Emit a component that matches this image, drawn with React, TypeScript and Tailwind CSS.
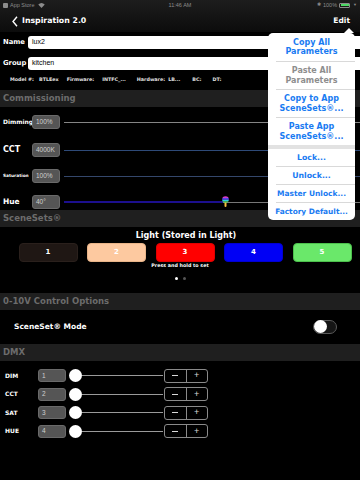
import React from 'react';

const levels = [
  { label: 'Dimming', size: 'text-[6px]', value: '100%', line: 'bg-[#858585]', mt: 'mt-[8px]' },
  { label: 'CCT', size: 'text-[8px]', value: '4000K', line: 'bg-[#2e4a78]', mt: 'mt-[14px]' },
  { label: 'Saturation', size: 'text-[4.3px]', value: '100%', line: 'bg-[#34476b]', mt: 'mt-[12px]' },
];

const scenes = [
  { n: '1', cls: 'bg-[#1f1714] border-[#2a201c]' },
  { n: '2', cls: 'bg-[#fdc9a0] border-[#e8b488]' },
  { n: '3', cls: 'bg-[#ff0000] border-[#e00000]' },
  { n: '4', cls: 'bg-[#0000f5] border-[#0000d0]' },
  { n: '5', cls: 'bg-[#6ae86a] border-[#4cc04c]' },
];

const dmx = [
  { label: 'DIM', v: '1' },
  { label: 'CCT', v: '2' },
  { label: 'SAT', v: '3' },
  { label: 'HUE', v: '4' },
];

function SectionHeader({ title }: { title: string }) {
  return (
    <div className="h-[17px] bg-[#1f1f1f] flex items-center pl-[3px] text-[8.5px] font-bold text-[#6c6c6c] leading-none">
      {title}
    </div>
  );
}

function ValueBox({ value, w = 'w-[28px]', h = 'h-[14px]' }: { value: string; w?: string; h?: string }) {
  return (
    <div
      className={`${w} ${h} shrink-0 rounded-[3px] bg-[#555555] border border-[#6a6a6a] flex items-center pl-[3px] font-['Liberation_Sans',sans-serif] text-[6.5px] text-[#d0d0d0] font-normal`}
    >
      {value}
    </div>
  );
}

function HueThumb() {
  return (
    <svg width="7" height="12" viewBox="0 0 7 12" className="absolute left-[158px] top-[-5px]">
      <defs>
        <clipPath id="hc">
          <circle cx="3.5" cy="3.5" r="3.3" />
        </clipPath>
      </defs>
      <rect x="2.5" y="6" width="2" height="5" rx="1" fill="#f5c040" />
      <g clipPath="url(#hc)">
        <rect x="0" y="0" width="7" height="2" fill="#d43cc8" />
        <rect x="0" y="2" width="7" height="1.8" fill="#5a3cf0" />
        <rect x="0" y="3.8" width="7" height="1.6" fill="#2ad0e0" />
        <rect x="0" y="5.4" width="7" height="2" fill="#5ee05a" />
      </g>
    </svg>
  );
}

function PopItem({ children, h, gray, size = 'text-[8px]' }: { children: React.ReactNode; h: string; gray?: boolean; size?: string }) {
  return (
    <div
      className={`${h} flex flex-col items-center justify-center text-center font-bold leading-[9.5px] ${size} ${gray ? 'text-[#8e8e8e]' : 'text-[#1a7bf2]'}`}
    >
      {children}
    </div>
  );
}

function PopDivider() {
  return <div className="h-px ml-[8px] bg-[#d9d9d9]" />;
}

export default function App() {
  return (
    <div className="relative w-[360px] h-[480px] overflow-hidden bg-black text-white font-['DejaVu_Sans',sans-serif] font-bold">
      {/* status + nav */}
      <div className="bg-gradient-to-b from-[#1d1d1d] to-[#0c0c0c]">
        <div className="h-[10px] grid grid-cols-3 items-center px-[3px] text-[5.5px] font-normal text-[#8c8c8c] font-['Liberation_Sans',sans-serif]">
          <div className="flex items-center gap-[2px]">
            <div className="w-[5px] h-[5px] rounded-[1px] bg-[#8c8c8c]" />
            <span>App Store</span>
            <svg width="7" height="5" viewBox="0 0 14 10" className="ml-[2px]">
              <path d="M7 10 L0.5 3.2 A9.5 9.5 0 0 1 13.5 3.2 Z" fill="#8c8c8c" />
            </svg>
          </div>
          <div className="text-center">11:46 AM</div>
          <div className="flex items-center justify-end gap-[2px]">
            <span className="text-[5px]">✱</span>
            <span>100%</span>
            <div className="w-[11px] h-[5px] border border-[#8c8c8c] rounded-[1px] p-[0.5px] flex">
              <div className="flex-1 bg-[#4cd964]" />
            </div>
            <span className="text-[4px] ml-[1px]">▼</span>
          </div>
        </div>
        <div className="h-[22px] flex items-center justify-between pl-[12px] pr-[10px]">
          <div className="flex items-center gap-[4px]">
            <svg width="6" height="11" viewBox="0 0 6 11">
              <path d="M5 0.7 L1 5.5 L5 10.3" stroke="white" strokeWidth="1.4" fill="none" />
            </svg>
            <span className="text-[7.8px] leading-none">Inspiration 2.0</span>
          </div>
          <span className="text-[7.5px] leading-none">Edit</span>
        </div>
      </div>

      {/* name / group */}
      <div className="pt-[4px] flex flex-col gap-[8px]">
        {[['Name', 'lux2'], ['Group', 'kitchen']].map(([l, v]) => (
          <div key={l} className="flex items-center">
            <span className="w-[28px] pl-[3px] text-[6.8px] leading-none">{l}</span>
            <div className="flex-1 h-[13px] bg-white rounded-l-[3px] flex items-center pl-[4px] font-['Liberation_Sans',sans-serif] font-normal text-[7px] text-black">
              {v}
            </div>
          </div>
        ))}
      </div>
      <div className="h-[20px] flex items-center pl-[10px] text-[4.8px] leading-none text-[#e0e0e0]">
        <span>Model #:</span>
        <span className="ml-[5px]">BTLEex</span>
        <span className="ml-[8px]">Firmware:</span>
        <span className="ml-[8px]">INTFC_...</span>
        <span className="ml-[11px]">Hardware:</span>
        <span className="ml-[3px]">LB...</span>
        <span className="ml-[12px]">BC:</span>
        <span className="ml-[11px]">DT:</span>
      </div>

      {/* commissioning */}
      <SectionHeader title="Commissioning" />
      <div className="flex flex-col pb-[1px]">
        {levels.map((r) => (
          <div key={r.label} className={`${r.mt} h-[14px] flex items-center`}>
            <span className={`w-[32px] pl-[3px] leading-none ${r.size}`}>{r.label}</span>
            <ValueBox value={r.value} />
            <div className={`ml-[4px] flex-1 h-px ${r.line}`} />
          </div>
        ))}
        <div className="mt-[12px] h-[14px] flex items-center">
          <span className="w-[32px] pl-[3px] leading-none text-[7.5px]">Hue</span>
          <ValueBox value="40°" />
          <div className="relative ml-[4px] flex-1 flex items-center">
            <div className="w-[159px] h-[1.5px] bg-[#1c0f8e]" />
            <div className="flex-1 h-px bg-[#777777]" />
            <HueThumb />
          </div>
        </div>
      </div>

      {/* scene sets */}
      <SectionHeader title="SceneSets®" />
      <div className="flex flex-col items-center pt-[5px]">
        <div className="text-[8px] leading-[8px] pl-[12px]">Light (Stored in Light)</div>
        <div className="mt-[3px] flex gap-[9.5px] pl-[10px]">
          {scenes.map((s) => (
            <div
              key={s.n}
              className={`w-[59px] h-[19px] rounded-[4px] border flex items-center justify-center text-[7px] text-white ${s.cls}`}
            >
              {s.n}
            </div>
          ))}
        </div>
        <div className="text-[4.8px] leading-[6px] mt-[1px]">Press and hold to set</div>
        <div className="mt-[8px] flex gap-[5px]">
          <div className="w-[3px] h-[3px] rounded-full bg-white" />
          <div className="w-[3px] h-[3px] rounded-full bg-[#555555]" />
        </div>
      </div>

      {/* 0-10V */}
      <div className="mt-[12.5px]">
        <SectionHeader title="0-10V Control Options" />
      </div>
      <div className="h-[34px] flex items-center justify-between pl-[14px] pr-[23px]">
        <span className="text-[7.5px] leading-none">SceneSet® Mode</span>
        <div className="w-[24px] h-[14px] rounded-full border border-[#5a5a5a] bg-[#151515] flex items-center">
          <div className="w-[13px] h-[13px] rounded-full bg-white" />
        </div>
      </div>

      {/* DMX */}
      <SectionHeader title="DMX" />
      <div className="pt-[6px] flex flex-col">
        {dmx.map((r) => (
          <div key={r.label} className="h-[18.5px] flex items-center pl-[5px]">
            <span className="w-[33px] text-[6px] leading-none">{r.label}</span>
            <ValueBox value={r.v} h="h-[13px]" />
            <div className="ml-[3px] w-[13px] h-[13px] rounded-full bg-white shrink-0" />
            <div className="w-[81px] h-px bg-[#9a9a9a]" />
            <div className="ml-[1px] w-[44px] h-[14px] border border-[#8a8a8a] rounded-[3px] flex text-[#d8d8d8] font-normal">
              <div className="flex-1 flex items-center justify-center border-r border-[#8a8a8a]">
                <div className="w-[6px] h-px bg-[#d8d8d8]" />
              </div>
              <div className="flex-1 flex items-center justify-center text-[9px] leading-none font-['Liberation_Sans',sans-serif]">+</div>
            </div>
          </div>
        ))}
      </div>

      {/* edit popover */}
      <div className="absolute left-[268px] top-[33px] w-[87px] bg-white rounded-[5px] flex flex-col">
        <div className="absolute -top-[5px] left-[76px] w-0 h-0 border-l-[5px] border-r-[5px] border-b-[5px] border-l-transparent border-r-transparent border-b-white" />
        <PopItem h="h-[28px]">
          <span>Copy All</span>
          <span>Parameters</span>
        </PopItem>
        <PopDivider />
        <PopItem h="h-[27px]" gray>
          <span>Paste All</span>
          <span>Parameters</span>
        </PopItem>
        <PopDivider />
        <PopItem h="h-[27px]">
          <span>Copy to App</span>
          <span>SceneSets®...</span>
        </PopItem>
        <PopDivider />
        <PopItem h="h-[27px]">
          <span>Paste App</span>
          <span>SceneSets®...</span>
        </PopItem>
        <div className="h-[4px] bg-[#e2e2e2]" />
        <PopItem h="h-[17px]" size="text-[7.8px]">Lock...</PopItem>
        <PopDivider />
        <PopItem h="h-[17px]" size="text-[7.8px]">Unlock...</PopItem>
        <PopDivider />
        <PopItem h="h-[17px]" size="text-[7.5px]">Master Unlock...</PopItem>
        <PopDivider />
        <PopItem h="h-[17px]" size="text-[7.4px]">Factory Default...</PopItem>
      </div>
    </div>
  );
}
